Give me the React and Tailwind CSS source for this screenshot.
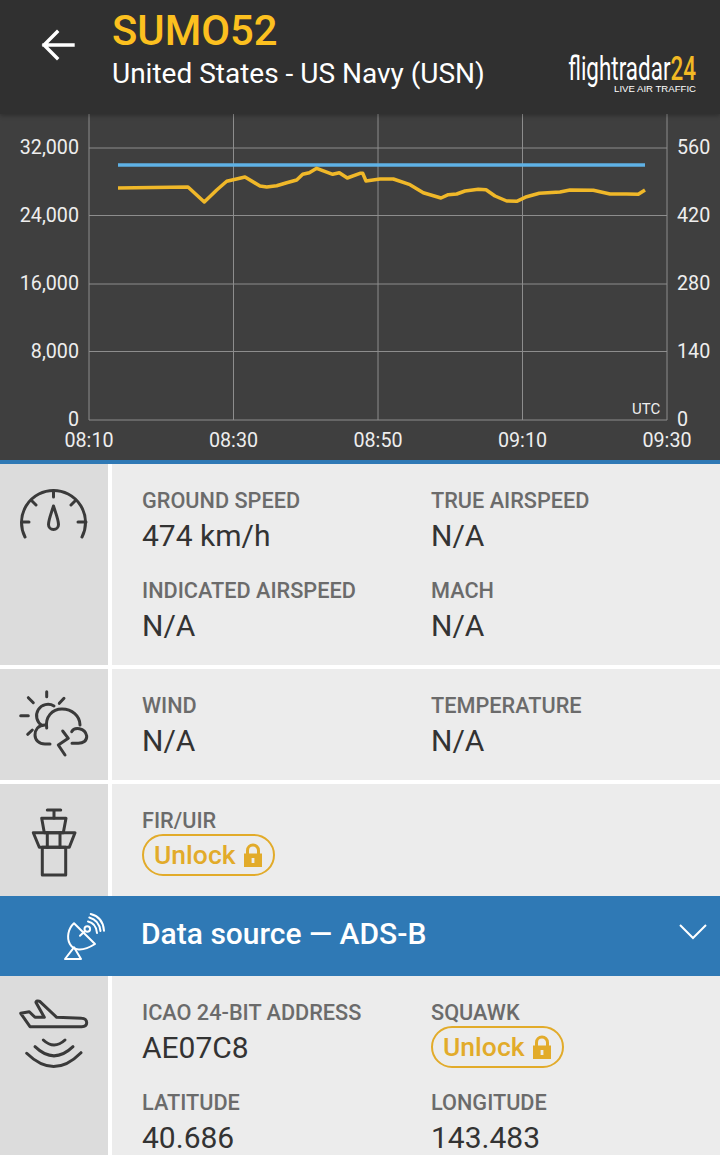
// App.jsx — flight detail panel

const altitude = [
  [118, 188], [188, 187], [204.3, 202], [216.7, 190], [226.7, 181.3], [233.3, 179.7], [245, 177],
  [260, 186], [266.7, 187], [276.7, 185.7], [286.7, 182.7], [296.7, 180], [302.7, 174.3], [309.3, 172.7],
  [316.7, 168.3], [332.7, 174.3], [339.3, 172.7], [347.3, 178], [360, 173.3], [362.7, 173.3], [366, 181],
  [380, 179], [393.3, 179], [410, 184.7], [423.3, 192.7], [441, 198], [448.3, 194.7], [456.7, 194],
  [465, 191], [478.3, 189.3], [486, 189.7], [495, 196], [506.7, 201], [516.7, 201.3], [526.7, 196.7],
  [539.3, 193.3], [560, 192], [570, 190], [593.3, 190.3], [610, 194], [626.7, 194], [638.3, 194.3], [645, 190],
]

const gridY = [148, 215.5, 284, 351.5, 420]
const gridX = [89, 233.5, 378, 522.5, 667]
const leftTicks = ['32,000', '24,000', '16,000', '8,000', '0']
const rightTicks = ['560', '420', '280', '140', '0']
const timeTicks = ['08:10', '08:30', '08:50', '09:10', '09:30']

function Chart() {
  return (
    <svg viewBox="0 114 720 346" className="block w-[720px] h-[346px] bg-[#3f3f3f]" fontFamily="Roboto, sans-serif">
      {gridX.map((x) => (
        <line key={x} x1={x} x2={x} y1="114" y2="420" stroke="#8d8d8d" strokeWidth="1" />
      ))}
      {gridY.map((y) => (
        <line key={y} x1="89" x2="667" y1={y} y2={y} stroke="#8d8d8d" strokeWidth="1" />
      ))}
      <polyline points="118,165 645,165" fill="none" stroke="#5fb2e6" strokeWidth="3.5" />
      <polyline
        points={altitude.map((p) => p.join(',')).join(' ')}
        fill="none"
        stroke="#f0b829"
        strokeWidth="3.5"
        strokeLinejoin="round"
      />
      {leftTicks.map((t, i) => (
        <text key={t} x="79" y={i === 4 ? 426 : gridY[i] + 6} textAnchor="end" fontSize="19.7" fill="#eeeeee">{t}</text>
      ))}
      {rightTicks.map((t, i) => (
        <text key={t} x="677" y={i === 4 ? 426 : gridY[i] + 6} fontSize="19.7" fill="#eeeeee">{t}</text>
      ))}
      {timeTicks.map((t, i) => (
        <text key={t} x={gridX[i]} y="447" textAnchor="middle" fontSize="19.7" fill="#eeeeee">{t}</text>
      ))}
      <text x="632" y="414" fontSize="15" fill="#eeeeee">UTC</text>
    </svg>
  )
}

function Gauge() {
  return (
    <svg viewBox="0 0 108 90" className="w-[108px] h-[90px]" fill="none" stroke="#3a3a3a" strokeWidth="3" strokeLinecap="round" strokeLinejoin="round">
      <path d="M25 73A32 32 0 1 1 82 73" />
      <path d="M53.5 27V33M22 58H29M78 58H86M32 37L36 41M75 37L71 41" />
      <path d="M53.5 42C51 50 48.5 56 48.5 60.5A5 5 0 0 0 58.5 60.5C58.5 56 56 50 53.5 42Z" />
    </svg>
  )
}

function Weather() {
  return (
    <svg viewBox="0 0 108 90" className="w-[108px] h-[90px]" fill="none" stroke="#3a3a3a" strokeWidth="3" strokeLinecap="round" strokeLinejoin="round">
      <path d="M46.7 22.7V27.7M20.7 46.7H28.3M28.3 28.7L33.3 33.7M64 29.3L59.3 34.3M27.7 65.3L32.3 61" />
      <path d="M42 56.5A10.5 10.5 0 0 1 54 37" />
      <path d="M46.7 59C45 48 52 40 62 40C72 40 80 47 80 56" />
      <path d="M45 56C38 56 35 61 35 66C35 71 39 75 45 75H50" />
      <path d="M71.7 62.7C74 58 85 58 86.7 67C87 72 83 74.3 78.3 74.3H72" />
      <path d="M62.7 62L68.3 69.3L58.3 76L65 86" />
    </svg>
  )
}

function Tower() {
  return (
    <svg viewBox="0 0 108 96" className="w-[108px] h-[96px]" fill="none" stroke="#3a3a3a" strokeWidth="3" strokeLinecap="round" strokeLinejoin="round">
      <path d="M47.3 26H60.7M54 26V34" />
      <path d="M41.7 34.3H66L63.3 48.7H44.3Z" />
      <path d="M33.3 48.7H75L69.3 63.3H39.3Z" />
      <path d="M47.3 48.7V63.3M60 48.7V63.3" />
      <path d="M42.3 63.3H65.7V91H42.3Z" />
    </svg>
  )
}

function PlaneSignal() {
  return (
    <svg viewBox="0 0 108 96" className="w-[108px] h-[96px]" fill="none" stroke="#3a3a3a" strokeWidth="3" strokeLinecap="round" strokeLinejoin="round">
      <path d="M20.7 37.3L30 50.7H81.7C85 50.7 86.7 49 86.7 46.8C86.7 44 84.5 42.3 81.7 42.3L56.7 41.3L40 25.6C38.5 24.6 35.6 24.8 36 26.5L44.3 41.3H35L29.3 35.7Z" />
      <path d="M43.3 64Q54 74 65 64" />
      <path d="M35 70.7Q54 89 73 70.7" />
      <path d="M26.7 77.3Q54 104 81 76.7" />
    </svg>
  )
}

function Dish() {
  return (
    <svg viewBox="60 8 48 56" className="w-[48px] h-[56px]" fill="none" stroke="#ffffff" strokeWidth="2" strokeLinecap="round" strokeLinejoin="round">
      <path d="M74 23.3C62 34 68 61 95 44Z" />
      <path d="M65 59H81L74 47.3Z" />
      <path d="M80 35.7L85 31" />
      <circle cx="87.3" cy="29" r="2.8" />
      <path d="M88 21.5Q96 23 97 33" />
      <path d="M89.3 17.5Q99 20 100.5 31" />
      <path d="M90.7 14Q103 17 104 30.7" />
    </svg>
  )
}

function Lock() {
  return (
    <svg viewBox="0 0 18 24" className="w-[18px] h-[24px] ml-[8px]">
      <path d="M3.5 11V7.5A5.5 5.5 0 0 1 14.5 7.5V11" fill="none" stroke="#e2ab2a" strokeWidth="3" />
      <path fillRule="evenodd" fill="#e2ab2a" d="M0 10.5H18V24H0ZM7.6 15V20H10.4V15Z" />
    </svg>
  )
}

function Unlock() {
  return (
    <div className="mt-[2px] w-[133px] h-[42px] flex items-center pl-[10px] border-2 border-[#e2ab2a] rounded-full text-[26.5px] font-medium text-[#e2ab2a]">
      Unlock
      <Lock />
    </div>
  )
}

function Field({ label, value, locked }) {
  return (
    <div>
      <div className="h-[24px] leading-[26px] text-[21.7px] font-medium text-[#6b6b6b]">{label}</div>
      {locked ? (
        <Unlock />
      ) : (
        <div className="h-[48px] leading-[48px] text-[30px] text-[#333333]">{value}</div>
      )}
    </div>
  )
}

function Row({ icon, fields, className }) {
  return (
    <div className={`flex gap-1 ${className}`}>
      <div className="w-[108px] shrink-0 bg-[#dcdcdc]">{icon}</div>
      <div className="flex-1 bg-[#ececec] pl-[30px] pt-[24px]">
        <div className="grid grid-cols-[289px_1fr] gap-y-[18px]">
          {fields.map((f) => (
            <Field key={f.label} {...f} />
          ))}
        </div>
      </div>
    </div>
  )
}

export default function App() {
  return (
    <div className="w-[720px] h-[1155px] overflow-hidden bg-white font-[Roboto,sans-serif]">
      {/* Header */}
      <div className="relative z-10 h-[114px] flex bg-[#303030] shadow-[0_2px_4px_rgba(0,0,0,0.25)]">
        <div className="w-[112px] shrink-0 pl-[41px] pt-[29px]">
          <svg viewBox="0 0 34 32" className="w-[34px] h-[32px]" fill="none" stroke="#ffffff" strokeWidth="3.4" strokeLinecap="square">
            <path d="M32 16H3M16 3L3 16L16 29" />
          </svg>
        </div>
        <div className="flex-1 pt-[7px]">
          <div className="h-[48px] leading-[48px] text-[41.8px] font-medium text-[#fcc01f]">SUMO52</div>
          <div className="h-[38px] leading-[38px] text-[28px] text-white">United States - US Navy (USN)</div>
        </div>
        <div className="w-[170px] shrink-0 pt-[54px] pr-[24px] flex flex-col items-end">
          <div className="h-[30px] leading-[30px] text-[33px] whitespace-nowrap text-white origin-right scale-x-[0.68]">
            flightradar<span className="text-[#f2b924] font-medium">24</span>
          </div>
          <div className="h-[10px] leading-[10px] text-[9.6px] whitespace-nowrap text-white font-['Liberation_Sans',sans-serif]">LIVE AIR TRAFFIC</div>
        </div>
      </div>

      <Chart />
      <div className="h-1 bg-[#2f79b5]" />

      <Row
        className="h-[201px] mb-1"
        icon={<Gauge />}
        fields={[
          { label: 'GROUND SPEED', value: '474 km/h' },
          { label: 'TRUE AIRSPEED', value: 'N/A' },
          { label: 'INDICATED AIRSPEED', value: 'N/A' },
          { label: 'MACH', value: 'N/A' },
        ]}
      />
      <Row
        className="h-[111px] mb-1"
        icon={<Weather />}
        fields={[
          { label: 'WIND', value: 'N/A' },
          { label: 'TEMPERATURE', value: 'N/A' },
        ]}
      />
      <Row
        className="h-[112px]"
        icon={<Tower />}
        fields={[{ label: 'FIR/UIR', locked: true }]}
      />

      {/* Data source bar */}
      <div className="h-[80px] flex items-center bg-[#2f79b5] text-white">
        <div className="w-[142px] shrink-0 pl-[60px] flex">
          <Dish />
        </div>
        <div className="flex-1 pb-[6px] -ml-[1px] text-[30px] font-medium">Data source — ADS-B</div>
        <svg viewBox="0 0 30 18" className="w-[30px] h-[18px] mr-[12px] -mt-[8px]" fill="none" stroke="#ffffff" strokeWidth="2">
          <path d="M2 2L15 15L28 2" />
        </svg>
      </div>

      <Row
        className="h-[179px]"
        icon={<PlaneSignal />}
        fields={[
          { label: 'ICAO 24-BIT ADDRESS', value: 'AE07C8' },
          { label: 'SQUAWK', locked: true },
          { label: 'LATITUDE', value: '40.686' },
          { label: 'LONGITUDE', value: '143.483' },
        ]}
      />
    </div>
  )
}
